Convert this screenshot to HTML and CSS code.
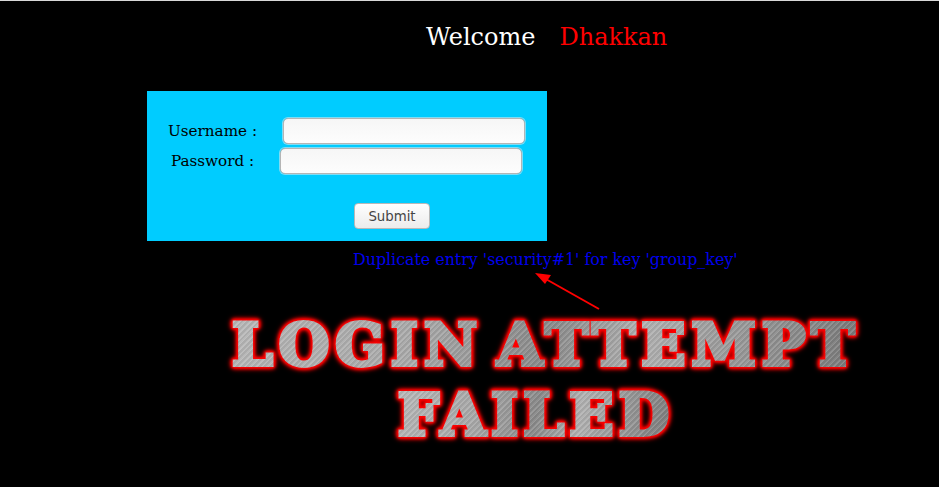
FILE: index.html
```html
<!DOCTYPE html>
<html lang="en">
<head>
<meta charset="utf-8">
<title>Less</title>
<link rel="stylesheet" href="styles.css">
</head>
<body>
<div class="topline"></div>
<header class="welcome"><span>Welcome</span><span class="name">Dhakkan</span></header>
<form class="panel">
  <div class="row"><label>Username :</label><input class="field" type="text"></div>
  <div class="row"><label>Password :</label><input class="field" type="password"></div>
  <div class="actions"><button class="submit" type="button">Submit</button></div>
</form>
<p class="error">Duplicate entry 'security#1' for key 'group_key'</p>
<svg class="arrow" width="80" height="50" viewBox="0 0 80 50"><line x1="74" y1="39" x2="19" y2="8" stroke="#f00" stroke-width="2"/><polygon points="10,3 26,5 20,14" fill="#f00"/></svg>
<div class="banner"><div class="banner-line">LOGIN ATTEMPT</div><div class="banner-line banner-line-second">FAILED</div></div>
</body>
</html>
```
FILE: styles.css
```css
html, body { margin: 0; padding: 0; height: 100%; }
body { background: #000; font-family: "DejaVu Serif", serif; overflow: hidden; position: relative; }
.topline { height: 1px; background: #d8d8d8; }
.welcome { display: flex; gap: 24px; padding: 22px 0 0 426px; height: 69px; box-sizing: border-box; font-size: 24px; line-height: 28px; color: #fff; }
.name { color: #f00; }
.panel { box-sizing: border-box; width: 400px; height: 150px; margin: 21px 0 0 147px; padding-top: 25px; background: #00ccff; color: #000; font-size: 15.2px; }
.row { display: flex; justify-content: center; align-items: center; gap: 26px; height: 30px; padding-right: 1px; }
.field { box-sizing: border-box; width: 242px; height: 26px; margin: 0; padding: 0 6px; background: linear-gradient(#f6f6f6, #fdfdfd); border: 1px solid #b5b5b5; border-radius: 5px; box-shadow: 0 0 0 1px #7fdcf5; }
.actions { display: flex; justify-content: center; padding: 27px 0 0 90px; }
.submit { box-sizing: border-box; width: 76px; height: 26px; padding: 1px 0 0; background: linear-gradient(#fefefe, #ececec); border: 1px solid #b8b8b8; border-radius: 4px; font-family: "DejaVu Sans", sans-serif; font-size: 13.3px; color: #444; }
.error { margin: 9px 0 0 353px; font-size: 15.85px; line-height: 20px; color: #0000ee; white-space: nowrap; }
.arrow { position: absolute; left: 525px; top: 270px; }
.banner { position: absolute; left: 228px; top: 310px; width: 632px; text-align: center; font-weight: 700; font-size: 58px; line-height: 70px; letter-spacing: 6px; word-spacing: -12px; }
.banner-line { width: max-content; margin: 0 auto; padding: 0 4px; color: transparent; background: repeating-linear-gradient(135deg, rgba(255,255,255,.14) 0 1px, rgba(0,0,0,.05) 1px 3px, rgba(255,255,255,.05) 3px 4px), linear-gradient(100deg, #b8b8b8 0%, #a8a8a8 30%, #8a8a8a 50%, #b0b0b0 65%, #777 100%); -webkit-background-clip: text; background-clip: text; -webkit-text-stroke: 4px transparent; filter: drop-shadow(0 0 1px #f00) drop-shadow(0 0 1.5px #f00) drop-shadow(0 0 1.5px #f00) drop-shadow(0 0 2px #f00); }
.banner-line-second { position: relative; right: 8px; letter-spacing: 5.2px; }
```
